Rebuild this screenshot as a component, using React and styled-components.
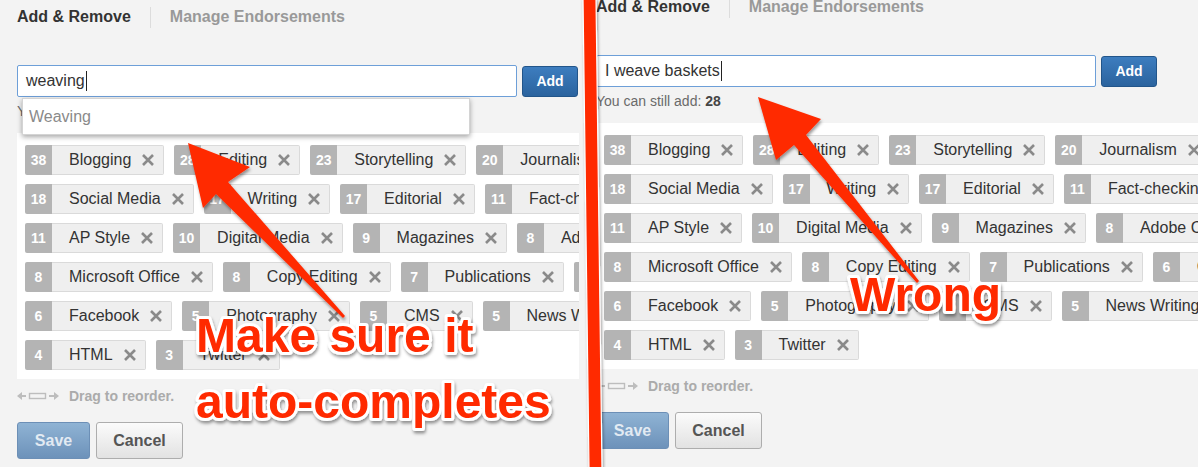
import React from 'react';
import styled, { createGlobalStyle } from 'styled-components';

const GlobalStyle = createGlobalStyle`
  html, body { margin: 0; padding: 0; background: #f3f3f3; }
  body { font-family: "Liberation Sans", Arial, Helvetica, sans-serif; }
  * { box-sizing: border-box; }
`;

const Page = styled.div`
  position: relative;
  width: 1198px;
  height: 467px;
  overflow: hidden;
  display: flex;
  background: #f3f3f3;
`;

const Panel = styled.section`
  flex: none;
  width: ${p => p.$width}px;
  height: 100%;
  overflow: hidden;
  padding-left: 17px;
`;

const PanelBody = styled.div`
  margin-top: ${p => p.$offset}px;
  width: 720px;
  display: flex;
  flex-direction: column;
  align-items: flex-start;
`;

const Tabs = styled.div`
  display: flex;
  align-items: center;
  height: 22px;
`;

const Tab = styled.span`
  font-size: 16px;
  font-weight: bold;
  line-height: 22px;
  color: ${p => (p.$active ? '#333' : '#999')};
`;

const TabDivider = styled.span`
  width: 1px;
  height: 21px;
  background: #dcdcdc;
  margin: 0 19px 0 19px;
`;

const InputRow = styled.div`
  position: relative;
  display: flex;
  align-items: center;
  margin-top: 37px;
`;

const InputBox = styled.div`
  width: 500px;
  height: 32px;
  border: 1px solid #6d9fd8;
  border-radius: 2px;
  background: #fff;
  padding-left: 8px;
  display: flex;
  align-items: center;
  font-size: 16px;
  color: #333;
`;

const Caret = styled.span`
  display: inline-block;
  width: 1px;
  height: 20px;
  background: #222;
  margin-left: 1px;
`;

const AddButton = styled.button`
  margin-left: 5px;
  width: 56px;
  height: 31px;
  border: 1px solid #22558a;
  border-radius: 3px;
  background: linear-gradient(#3d7dbf, #2b639e);
  color: #fff;
  font-family: inherit;
  font-size: 14px;
  font-weight: bold;
  padding: 0;
`;

const Suggestions = styled.ul`
  position: absolute;
  left: 5px;
  top: 33px;
  width: 448px;
  height: 37px;
  margin: 0;
  padding: 0 0 0 6px;
  list-style: none;
  background: #fff;
  border: 1px solid #d4d4d4;
  box-shadow: 0 2px 5px rgba(0, 0, 0, 0.35);
  display: flex;
  align-items: center;
  z-index: 2;
`;

const Suggestion = styled.li`
  font-size: 16px;
  color: #8a8a8a;
`;

const Hint = styled.div`
  margin-top: 5px;
  font-size: 14px;
  line-height: 18px;
  color: #6a6a6a;
  b { color: #454545; }
`;

const TagBox = styled.div`
  margin-top: 13px;
  width: 720px;
  background: #fff;
  padding: 12px 8px 0;
`;

const TagRow = styled.div`
  display: flex;
  gap: 10px;
  margin-bottom: 9px;
`;

const Tag = styled.div`
  flex: none;
  display: flex;
  height: 30px;
`;

const TagCount = styled.span`
  width: 27px;
  background: #b4b4b4;
  border-radius: 2px 0 0 2px;
  color: #fff;
  font-size: 14px;
  font-weight: bold;
  display: flex;
  align-items: center;
  justify-content: center;
`;

const TagLabel = styled.span`
  display: flex;
  align-items: center;
  background: #efefef;
  border: 1px solid #dadada;
  border-left: none;
  border-radius: 0 2px 2px 0;
  padding: 0 8px 0 17px;
  font-size: 16px;
  color: #333;
  white-space: nowrap;
`;

const RemoveIcon = styled.svg`
  flex: none;
  width: 14px;
  height: 14px;
  margin-left: 10px;
`;

const DragHint = styled.div`
  margin-top: 8px;
  height: 18px;
  display: flex;
  align-items: center;
  font-size: 14px;
  font-weight: bold;
  color: #ababab;
`;

const DragIcon = styled.svg`
  width: 42px;
  height: 10px;
  margin-right: 10px;
`;

const Actions = styled.div`
  margin-top: 17px;
  display: flex;
  gap: 6px;
`;

const Button = styled.button`
  height: 37px;
  padding: 0;
  border-radius: 3px;
  font-family: inherit;
  font-size: 16px;
  font-weight: bold;
  width: ${p => p.$width}px;
  ${p =>
    p.$primary
      ? `
    border: 1px solid #6c8fb6;
    background: linear-gradient(#8fb3d4, #6d92ba);
    color: rgba(255,255,255,0.78);
  `
      : `
    border: 1px solid #adadad;
    background: linear-gradient(#fbfbfb, #e2e2e2);
    color: #555;
  `}
`;

const Overlay = styled.svg`
  position: absolute;
  left: 0;
  top: 0;
  width: 1198px;
  height: 467px;
  pointer-events: none;
  z-index: 5;
`;

const RED = '#ff2a00';

const rows = [
  [[38, 'Blogging'], [28, 'Editing'], [23, 'Storytelling'], [20, 'Journalism']],
  [[18, 'Social Media'], [17, 'Writing'], [17, 'Editorial'], [11, 'Fact-checking']],
  [[11, 'AP Style'], [10, 'Digital Media'], [9, 'Magazines'], [8, 'Adobe Creative Suite']],
  [[8, 'Microsoft Office'], [8, 'Copy Editing'], [7, 'Publications'], [6, 'Copywriting']],
  [[6, 'Facebook'], [5, 'Photography'], [5, 'CMS'], [5, 'News Writing']],
  [[4, 'HTML'], [3, 'Twitter']],
];

function SkillTag({ count, label }) {
  return (
    <Tag>
      <TagCount>{count}</TagCount>
      <TagLabel>
        {label}
        <RemoveIcon viewBox="0 0 14 14">
          <path d="M2 2 L12 12 M12 2 L2 12" stroke="#8a8a8a" strokeWidth="2.6" fill="none" />
        </RemoveIcon>
      </TagLabel>
    </Tag>
  );
}

function SkillsEditor({ width, offset, value, suggestion }) {
  return (
    <Panel $width={width}>
      <PanelBody $offset={offset}>
        <Tabs>
          <Tab $active>Add &amp; Remove</Tab>
          <TabDivider />
          <Tab>Manage Endorsements</Tab>
        </Tabs>
        <InputRow>
          <InputBox>
            {value}
            <Caret />
          </InputBox>
          <AddButton>Add</AddButton>
          {suggestion && (
            <Suggestions>
              <Suggestion>{suggestion}</Suggestion>
            </Suggestions>
          )}
        </InputRow>
        <Hint>
          You can still add: <b>28</b>
        </Hint>
        <TagBox>
          {rows.map((row, i) => (
            <TagRow key={i}>
              {row.map(([c, l]) => (
                <SkillTag key={l} count={c} label={l} />
              ))}
            </TagRow>
          ))}
        </TagBox>
        <DragHint>
          <DragIcon viewBox="0 0 42 10">
            <path d="M0 5 L5 1 L5 4 L9 4 L9 6 L5 6 L5 9 Z" fill="#bdbdbd" />
            <rect x="12.5" y="2.5" width="16" height="5" fill="none" stroke="#bdbdbd" strokeWidth="1.4" />
            <path d="M42 5 L37 1 L37 4 L32 4 L32 6 L37 6 L37 9 Z" fill="#bdbdbd" />
          </DragIcon>
          Drag to reorder.
        </DragHint>
        <Actions>
          <Button $primary $width={73}>Save</Button>
          <Button $width={87}>Cancel</Button>
        </Actions>
      </PanelBody>
    </Panel>
  );
}

function Annotations() {
  const textProps = {
    fill: RED,
    stroke: '#fff',
    strokeWidth: 6,
    strokeLinejoin: 'round',
    paintOrder: 'stroke',
    fontFamily: '"Liberation Sans", Arial, sans-serif',
    fontWeight: 'bold',
    fontSize: 48,
  };
  return (
    <Overlay viewBox="0 0 1198 467">
      <defs>
        <filter id="shadow" x="-20%" y="-20%" width="140%" height="140%">
          <feDropShadow dx="1" dy="2.5" stdDeviation="1.8" floodColor="#000" floodOpacity="0.4" />
        </filter>
      </defs>
      <polygon
        points="583,-2 596,-2 602,469 589,469"
        fill={RED}
        stroke="#fff"
        strokeWidth="1.2"
        filter="url(#shadow)"
      />
      <polygon
        points="188,143 250,167 228,182 345,316 343,318 216,194 203,208"
        fill={RED}
        filter="url(#shadow)"
      />
      <polygon
        points="758,97 821,119 806,135 919,281 917,283 794,145 776,160"
        fill={RED}
        filter="url(#shadow)"
      />
      <g filter="url(#shadow)">
        <text x="196" y="352" {...textProps}>Make sure it</text>
        <text x="196" y="418" {...textProps}>auto-completes</text>
        <text x="850" y="311" {...textProps}>Wrong</text>
      </g>
    </Overlay>
  );
}

export default function App() {
  return (
    <>
      <GlobalStyle />
      <Page>
        <SkillsEditor width={579} offset={6} value="weaving" suggestion="Weaving" />
        <SkillsEditor width={619} offset={-4} value="I weave baskets" />
        <Annotations />
      </Page>
    </>
  );
}
